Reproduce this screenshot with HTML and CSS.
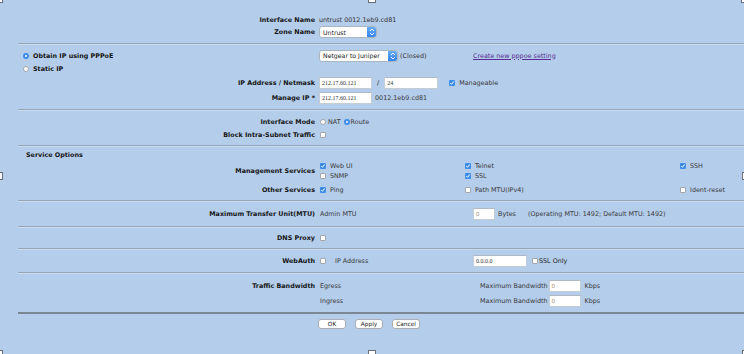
FILE: index.html
```html
<!DOCTYPE html>
<html lang="en">
<head>
    <meta charset="UTF-8">
    <title>Interface Edit</title>
    <link rel="stylesheet" href="styles.css">
</head>
<body>
    <!-- selection handles round the frame -->
    <div class="handle h-tl"></div>
    <div class="handle h-tc"></div>
    <div class="handle h-tr"></div>
    <div class="handle h-ml"></div>
    <div class="handle h-mr"></div>
    <div class="handle h-bl"></div>
    <div class="handle h-bc"></div>
    <div class="handle h-br"></div>

    <form class="page">
        <div class="sec sec-top">
            <div class="row h12">
                <div class="lbl">Interface Name</div>
                <div class="val">untrust 0012.1eb9.cd81</div>
            </div>
            <div class="row h12">
                <div class="lbl">Zone Name</div>
                <div class="val">
                    <span class="select w58">Untrust<span class="spin"><svg width="10" height="12" viewBox="0 0 10 12"><path d="M3 5 L5 3 L7 5 M3 7 L5 9 L7 7" fill="none" stroke="#fff" stroke-width="1"/></svg></span></span>
                </div>
            </div>
        </div>

        <div class="sec s-ip">
            <div class="row h13">
                <div class="lbl lbl-left"><span class="radio on"></span>Obtain IP using PPPoE</div>
                <div class="val split">
                    <div class="cell">
                        <span class="select w78">Netgear to Juniper<span class="spin"><svg width="10" height="12" viewBox="0 0 10 12"><path d="M3 5 L5 3 L7 5 M3 7 L5 9 L7 7" fill="none" stroke="#fff" stroke-width="1"/></svg></span></span>
                        <span class="after-sel">(Closed)</span>
                    </div>
                    <div class="cell"><a class="link" href="#">Create new pppoe setting</a></div>
                </div>
            </div>
            <div class="row h13">
                <div class="lbl lbl-left"><span class="radio"></span>Static IP</div>
                <div class="val"></div>
            </div>
            <div class="row h15">
                <div class="lbl">IP Address / Netmask</div>
                <div class="val">
                    <span class="input w53">212.17.60.121</span>
                    <span class="slash">/</span>
                    <span class="input w54">24</span>
                    <span class="cb on manage"><svg width="6" height="6" viewBox="0 0 6 6"><path d="M1.3 3.1 L2.5 4.3 L4.7 1.5" fill="none" stroke="#fff" stroke-width="1"/></svg></span>
                    <span class="txt">Manageable</span>
                </div>
            </div>
            <div class="row h15">
                <div class="lbl">Manage IP *</div>
                <div class="val">
                    <span class="input w53">212.17.60.121</span>
                    <span class="txt mac">0012.1eb9.cd81</span>
                </div>
            </div>
        </div>

        <div class="sec s-mode">
            <div class="row h13">
                <div class="lbl">Interface Mode</div>
                <div class="val">
                    <span class="radio first"></span><span class="txt">NAT</span>
                    <span class="radio on route"></span><span class="txt">Route</span>
                </div>
            </div>
            <div class="row h13">
                <div class="lbl">Block Intra-Subnet Traffic</div>
                <div class="val"><span class="cb first"></span></div>
            </div>
        </div>

        <div class="sec s-svc">
            <div class="sec-title">Service Options</div>
            <div class="row">
                <div class="lbl">Management Services</div>
                <div class="val svc">
                    <div class="opt"><span class="cb on"><svg width="6" height="6" viewBox="0 0 6 6"><path d="M1.3 3.1 L2.5 4.3 L4.7 1.5" fill="none" stroke="#fff" stroke-width="1"/></svg></span>Web UI</div>
                    <div class="opt"><span class="cb on"><svg width="6" height="6" viewBox="0 0 6 6"><path d="M1.3 3.1 L2.5 4.3 L4.7 1.5" fill="none" stroke="#fff" stroke-width="1"/></svg></span>Telnet</div>
                    <div class="opt"><span class="cb on"><svg width="6" height="6" viewBox="0 0 6 6"><path d="M1.3 3.1 L2.5 4.3 L4.7 1.5" fill="none" stroke="#fff" stroke-width="1"/></svg></span>SSH</div>
                    <div class="opt"><span class="cb"></span>SNMP</div>
                    <div class="opt"><span class="cb on"><svg width="6" height="6" viewBox="0 0 6 6"><path d="M1.3 3.1 L2.5 4.3 L4.7 1.5" fill="none" stroke="#fff" stroke-width="1"/></svg></span>SSL</div>
                    <div class="opt"></div>
                </div>
            </div>
            <div class="row h13 other">
                <div class="lbl">Other Services</div>
                <div class="val svc one">
                    <div class="opt"><span class="cb on"><svg width="6" height="6" viewBox="0 0 6 6"><path d="M1.3 3.1 L2.5 4.3 L4.7 1.5" fill="none" stroke="#fff" stroke-width="1"/></svg></span>Ping</div>
                    <div class="opt"><span class="cb"></span>Path MTU(IPv4)</div>
                    <div class="opt"><span class="cb"></span>Ident-reset</div>
                </div>
            </div>
        </div>

        <div class="sec s-mtu">
            <div class="row h15">
                <div class="lbl">Maximum Transfer Unit(MTU)</div>
                <div class="val split">
                    <div class="cell"><span class="txt first-txt">Admin MTU</span></div>
                    <div class="cell">
                        <span class="input w22 num">0</span>
                        <span class="txt bytes">Bytes</span>
                        <span class="txt oper">(Operating MTU: 1492; Default MTU: 1492)</span>
                    </div>
                </div>
            </div>
        </div>

        <div class="sec s-dns">
            <div class="row h13">
                <div class="lbl">DNS Proxy</div>
                <div class="val"><span class="cb first"></span></div>
            </div>
        </div>

        <div class="sec s-auth">
            <div class="row h15">
                <div class="lbl">WebAuth</div>
                <div class="val split">
                    <div class="cell"><span class="cb first"></span><span class="txt ipaddr">IP Address</span></div>
                    <div class="cell">
                        <span class="input w54">0.0.0.0</span>
                        <span class="cb ssl"></span><span class="txt dark">SSL Only</span>
                    </div>
                </div>
            </div>
        </div>

        <div class="sec s-bw">
            <div class="row h15">
                <div class="lbl">Traffic Bandwidth</div>
                <div class="val split">
                    <div class="cell"><span class="txt first-txt">Egress</span></div>
                    <div class="cell">
                        <span class="txt maxbw">Maximum Bandwidth</span>
                        <span class="input w32 num">0</span>
                        <span class="txt kbps">Kbps</span>
                    </div>
                </div>
            </div>
            <div class="row h15">
                <div class="lbl"></div>
                <div class="val split">
                    <div class="cell"><span class="txt first-txt">Ingress</span></div>
                    <div class="cell">
                        <span class="txt maxbw">Maximum Bandwidth</span>
                        <span class="input w32 num">0</span>
                        <span class="txt kbps">Kbps</span>
                    </div>
                </div>
            </div>
        </div>

        <div class="sec s-btns">
            <div class="row">
                <div class="lbl"></div>
                <div class="val buttons">
                    <button type="button" class="btn">OK</button>
                    <button type="button" class="btn">Apply</button>
                    <button type="button" class="btn">Cancel</button>
                </div>
            </div>
        </div>
    </form>
</body>
</html>
```

FILE: styles.css
```css
html, body {
    margin: 0;
    height: 100%;
}
body {
    background-color: #b3cdea;
    font-family: "DejaVu Sans", Verdana, sans-serif;
    font-size: 6.4px;
    color: #333;
    position: relative;
    overflow: hidden;
}

/* frame handles */
.handle {
    position: absolute;
    width: 6px;
    height: 6px;
    background: #fff;
    border: 1px solid #6a6e73;
}
.h-tl { left: -5px; top: -5px; }
.h-tc { left: 368px; top: -5px; }
.h-tr { left: 741px; top: -5px; }
.h-ml { left: -5px; top: 172px; }
.h-mr { left: 742px; top: 172px; }
.h-bl { left: -5px; top: 350px; }
.h-bc { left: 368px; top: 350px; }
.h-br { left: 742px; top: 350px; }

.page {
    margin: 0 0 0 18px;
}

.sec {
    border-top: 1px solid #97a5b5;
    box-shadow: inset 0 1px 0 #c9dbef;
    padding: 5px 0 4px;
}
.sec-top {
    border-top: none;
    box-shadow: none;
    padding: 14px 0 5px;
}
.s-svc { padding-top: 4px; }
.s-mtu { padding: 5px 0 5px; }
.s-dns, .s-auth { padding: 4px 0 4px; }
.s-btns {
    border-top: 2px solid #7c8794;
    box-shadow: none;
    padding-top: 5px;
}

.row {
    display: grid;
    grid-template-columns: 297px 1fr;
    column-gap: 4px;
    align-items: center;
}
.h12 { height: 12px; }
.h13 { height: 13px; }
.h15 { height: 15px; }
.other { margin-top: 2px; }

.lbl {
    font-weight: bold;
    color: #151515;
    text-align: right;
    white-space: nowrap;
}
.lbl-left {
    text-align: left;
    padding-left: 5px;
    display: flex;
    align-items: center;
}
.lbl-left .radio { margin-right: 4px; }

.val {
    display: flex;
    align-items: center;
    white-space: nowrap;
}
.val.split {
    display: grid;
    grid-template-columns: 154px auto;
}
.cell {
    display: flex;
    align-items: center;
}

.sec-title {
    font-weight: bold;
    color: #151515;
    padding-left: 8px;
    height: 11px;
    line-height: 11px;
}

.txt { color: #3a3a3a; }
.dark { color: #1e1e1e; }
.first-txt { margin-left: 1px; }
.slash { margin: 0 5px 0 5px; color: #222; }
.manage { margin-left: 11px; margin-right: 4px; }
.mac { margin-left: 3px; }
.after-sel { margin-left: 2px; }
.bytes { margin-left: 3px; }
.oper { margin-left: 12px; }
.ipaddr { margin-left: 9px; }
.ssl { margin-left: 5px; margin-right: 1px; }
.maxbw { margin-left: 7px; margin-right: 1px; }
.kbps { margin-left: 4px; }

.link {
    color: #5a2f93;
    text-decoration: underline;
}

/* select boxes */
.select {
    position: relative;
    display: inline-flex;
    align-items: center;
    box-sizing: border-box;
    height: 12px;
    padding-left: 3px;
    background: #fff;
    border: 1px solid #aab5c2;
    border-radius: 3px;
    color: #222;
    font-size: 6.2px;
    overflow: hidden;
}
.select .spin {
    position: absolute;
    right: -1px;
    top: -1px;
    width: 10px;
    height: 12px;
    border-radius: 0 3px 3px 0;
    background: linear-gradient(#6db3fa, #2f7fe9);
    display: flex;
}
.w58 { width: 58px; }
.w78 { width: 79px; }

/* text inputs */
.input {
    display: inline-block;
    box-sizing: border-box;
    height: 12px;
    line-height: 11px;
    padding-left: 2px;
    background: #fff;
    border: 1px solid #c4ccd4;
    border-top-color: #b0b8c1;
    font-family: "Liberation Serif", "Times New Roman", serif;
    font-size: 6px;
    color: #333;
}
.num { color: #a08d78; font-family: "DejaVu Sans", sans-serif; font-size: 5.6px; }
.w22 { width: 22px; }
.w32 { width: 32px; }
.w53 { width: 53px; }
.w54 { width: 54px; }

/* checkboxes and radios */
.cb {
    display: inline-flex;
    box-sizing: border-box;
    width: 6px;
    height: 6px;
    background: #fff;
    border: 1px solid #a2a6ab;
    border-radius: 1px;
    flex: none;
}
.cb.on {
    border: none;
    background: #3d8de8;
}
.radio {
    display: inline-block;
    box-sizing: border-box;
    width: 6px;
    height: 6px;
    border-radius: 50%;
    background: #fff;
    border: 1px solid #a2a6ab;
    flex: none;
}
.radio.on {
    border: 2px solid #3d8de8;
    background: #fff;
}
.first { margin-left: 1px; }
.radio.first { margin-right: 2px; }
.radio.route { margin-left: 3px; margin-right: 1px; }

/* services grid */
.svc {
    display: grid;
    grid-template-columns: 145px 215px auto;
    grid-auto-rows: 10px;
}
.svc.one { grid-auto-rows: 13px; }
.opt {
    display: flex;
    align-items: center;
    padding-left: 1px;
    color: #3a3a3a;
}
.opt .cb { margin-right: 4px; }

/* buttons */
.buttons { margin-left: -1px; }
.btn {
    box-sizing: border-box;
    width: 28px;
    height: 10px;
    padding: 0;
    margin-right: 9px;
    background: #fff;
    border: 1px solid #a9acb0;
    border-radius: 3px;
    font-family: "DejaVu Sans", sans-serif;
    font-size: 5.8px;
    color: #222;
    line-height: 8px;
}
```
